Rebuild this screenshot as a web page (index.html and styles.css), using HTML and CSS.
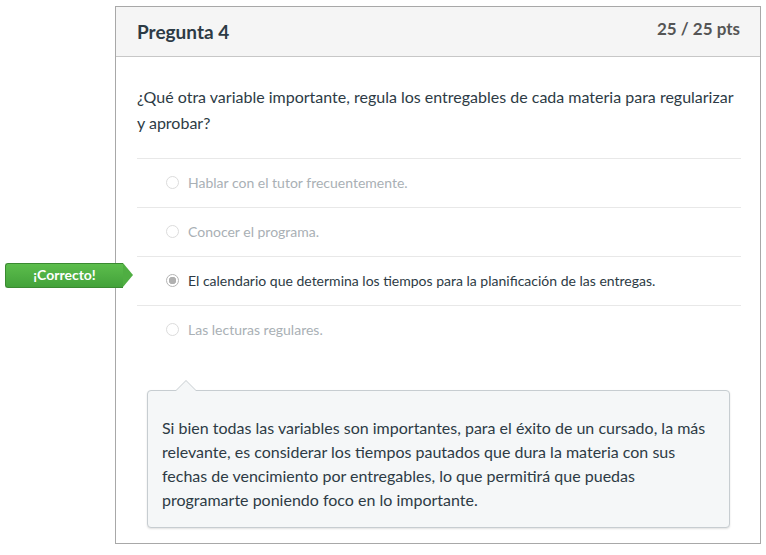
FILE: index.html
```html
<!DOCTYPE html>
<html lang="es">
<head>
<meta charset="utf-8">
<title>Pregunta 4</title>
<link rel="stylesheet" href="styles.css">
</head>
<body>
<div class="card">
  <div class="header">
    <span class="title">Pregunta 4</span>
    <span class="pts">25 / 25 pts</span>
  </div>
  <div class="body">
    <p class="question">¿Qué otra variable importante, regula los entregables de cada materia para regularizar y aprobar?</p>
    <ul class="answers">
      <li class="answer"><span class="radio"></span>Hablar con el tutor frecuentemente.</li>
      <li class="answer"><span class="radio"></span>Conocer el programa.</li>
      <li class="answer selected"><span class="badge">¡Correcto!</span><span class="radio checked"></span>El calendario que determina los tiempos para la planificación de las entregas.</li>
      <li class="answer last"><span class="radio"></span>Las lecturas regulares.</li>
    </ul>
    <div class="comment">Si bien todas las variables son importantes, para el éxito de un cursado, la más relevante, es considerar los tiempos pautados que dura la materia con sus fechas de vencimiento por entregables, lo que permitirá que puedas programarte poniendo foco en lo importante.</div>
  </div>
</div>
</body>
</html>
```

FILE: styles.css
```css
* { box-sizing: border-box; }
html, body { margin: 0; padding: 0; background: #fff; }
body {
  font-family: Lato, "Open Sans", sans-serif;
  color: #2d3b45;
  padding: 6px 0 0 115px;
}
.card {
  width: 646px;
  height: 538px;
  border: 1px solid #a8a8a8;
  background: #fff;
}
.header {
  height: 50px;
  background: #f5f5f5;
  border-bottom: 1px solid #c7c7c7;
  display: flex;
  justify-content: space-between;
  align-items: flex-start;
  padding: 0 20px 0 21px;
}
.title {
  font-size: 19px;
  font-weight: 700;
  color: #2d3b45;
  margin-top: 13px;
}
.pts {
  font-size: 17px;
  font-weight: 700;
  color: #555;
  margin-top: 11px;
}
.body {
  padding: 27px 19px 0 21px;
}
.question {
  margin: 0;
  font-size: 16px;
  line-height: 26px;
  padding-bottom: 22px;
}
.answers {
  list-style: none;
  margin: 0;
  padding: 0;
}
.answer {
  position: relative;
  height: 49px;
  border-top: 1px solid #e8e8e8;
  display: flex;
  align-items: center;
  padding-left: 29px;
  padding-bottom: 1px;
  font-size: 14px;
  color: #a9b0b5;
}
.answer.selected { color: #2d3b45; }
.radio {
  width: 13px;
  height: 13px;
  border-radius: 50%;
  border: 1px solid #dcdcdc;
  background: #fff;
  margin-right: 9px;
  flex: none;
}
.radio.checked {
  border-color: #b5b5b5;
  background: radial-gradient(circle, #b0b0b0 0 3.5px, #fff 4px);
}
.badge {
  position: absolute;
  left: -132px;
  top: 6px;
  width: 118px;
  height: 25px;
  background: linear-gradient(#5cbd4c, #43a23a);
  border: 1px solid #3a8a31;
  border-right: none;
  border-radius: 3px 0 0 3px;
  color: #fff;
  font-size: 14px;
  font-weight: 700;
  display: flex;
  align-items: center;
  justify-content: center;
  padding-bottom: 2px;
}
.badge::after {
  content: "";
  position: absolute;
  right: -10px;
  top: -1px;
  border-top: 12.5px solid transparent;
  border-bottom: 12.5px solid transparent;
  border-left: 10px solid #4fae42;
}
.comment {
  position: relative;
  margin: 36px 11px 0 10px;
  background: #f5f7f8;
  border: 1px solid #c7cdd1;
  border-radius: 4px;
  box-shadow: 0 1px 2px rgba(0,0,0,0.12);
  padding: 25px 15px 15px 14px;
  font-size: 16px;
  line-height: 24px;
  color: #2d3b45;
}
.comment::before {
  content: "";
  position: absolute;
  left: 27px;
  top: -11px;
  border-left: 11px solid transparent;
  border-right: 11px solid transparent;
  border-bottom: 11px solid #c7cdd1;
}
.comment::after {
  content: "";
  position: absolute;
  left: 28px;
  top: -10px;
  border-left: 10px solid transparent;
  border-right: 10px solid transparent;
  border-bottom: 10px solid #f5f7f8;
}
```
